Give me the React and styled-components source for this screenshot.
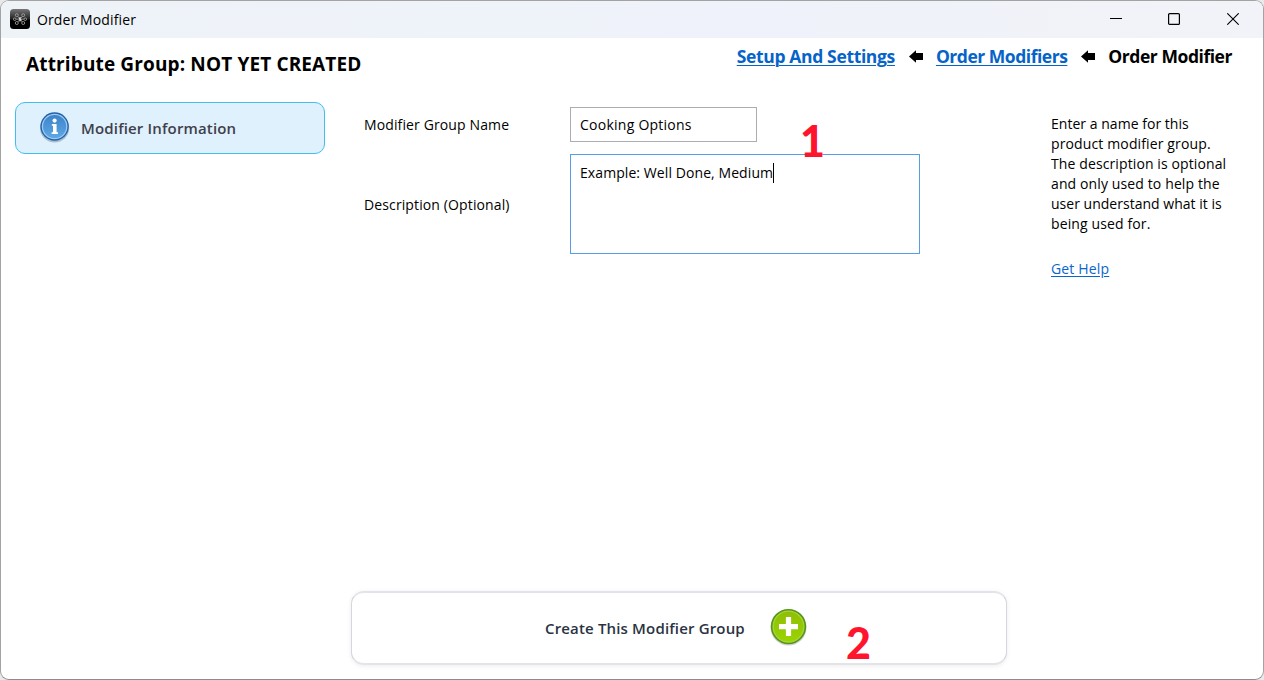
import React, { useState } from "react";
import styled, { createGlobalStyle, css } from "styled-components";

const GlobalStyle = createGlobalStyle`
    * {
        box-sizing: border-box;
    }
    body {
        margin: 0;
        background: #e9e9e9;
        font-family: "Open Sans", "Noto Sans", sans-serif;
        color: #000;
        overflow: hidden;
    }
`;

const Window = styled.div`
    position: relative;
    display: flex;
    flex-direction: column;
    width: 1264px;
    height: 680px;
    background: #fff;
    border: 1px solid #a3a3a3;
    border-bottom-color: #8c8c8c;
    border-radius: 9px;
    overflow: hidden;
`;

const TitleBar = styled.div`
    display: flex;
    align-items: center;
    height: 37px;
    padding: 0 0 1px 9px;
    background: linear-gradient(90deg, #eef3f8, #eff2fa 60%, #f2f3f8);
`;

const WindowTitle = styled.div`
    flex: 1;
    margin: 1px 0 0 7px;
    font-size: 14px;
    letter-spacing: 0.12px;
    line-height: 20px;
`;

const WindowButtons = styled.div`
    display: flex;
    gap: 46px;
    padding-right: 24px;

    svg {
        display: block;
    }
    svg:last-child {
        margin-left: 1px;
    }
`;

const Header = styled.div`
    display: flex;
    justify-content: space-between;
    height: 64px;
    padding: 4px 31px 0 25px;
`;

const PageTitle = styled.h1`
    margin: 9px 0 0;
    font-size: 19px;
    font-weight: 700;
    line-height: 26px;
    letter-spacing: 0.14px;
    white-space: nowrap;
`;

const Breadcrumbs = styled.div`
    display: flex;
    align-items: center;
    height: 28px;
    font-size: 17.5px;
    font-weight: 700;
    line-height: 28px;
    white-space: nowrap;

    svg {
        margin: 0 13px 0 14px;
    }
`;

const Crumb = styled.span`
    letter-spacing: ${props => props.$spacing || 0}px;
    ${props => props.$link && css`
        color: #0563c9;
        text-decoration: underline;
        text-decoration-thickness: 1px;
        text-underline-offset: 2px;
    `}
`;

const Body = styled.div`
    display: grid;
    grid-template-columns: 310px 1fr 176px;
    padding: 0 36px 0 14px;
    flex: 1;
`;

const SideItem = styled.div`
    display: flex;
    align-items: center;
    height: 52px;
    padding-left: 22px;
    background: #dff1fd;
    border: 1px solid #41bdf0;
    border-radius: 10px;

    svg {
        margin-bottom: 2px;
    }
`;

const SideLabel = styled.span`
    margin-left: 9px;
    font-size: 15px;
    font-weight: 600;
    line-height: 22px;
    color: #40404a;
    letter-spacing: 0.16px;
`;

const Form = styled.div`
    display: grid;
    grid-template-columns: 206px 350px;
    grid-template-rows: 35px 100px;
    row-gap: 12px;
    align-content: start;
    align-items: center;
    padding: 5px 0 0 39px;
`;

const Label = styled.label`
    padding-top: 1px;
    font-size: 14px;
    line-height: 20px;
    letter-spacing: 0.12px;
`;

const fieldStyle = css`
    margin: 0;
    outline: none;
    background: #fff;
    color: #000;
    font-family: inherit;
    font-size: 14px;
    line-height: 20px;
    border-radius: 0;
`;

const TextInput = styled.input`
    ${fieldStyle}
    width: 187px;
    height: 35px;
    padding: 0 9px;
    border: 1px solid #abadb3;
    letter-spacing: 0.25px;
`;

const TextArea = styled.div`
    ${fieldStyle}
    display: flex;
    align-items: flex-start;
    width: 350px;
    height: 100px;
    padding: 8px 9px;
    border: 1px solid #569de5;
    letter-spacing: 0.08px;
`;

const Caret = styled.span`
    width: 1px;
    height: 20px;
    background: #000;
`;

const Help = styled.div`
    padding-top: 12px;
    font-size: 14px;
    line-height: 20px;
    white-space: nowrap;
`;

const HelpLine = styled.div`
    letter-spacing: ${props => props.$spacing || 0}px;
`;

const HelpLink = styled.div`
    margin-top: 25px;
    color: #0a66cc;
    letter-spacing: 0.16px;
    text-decoration: underline;
    text-underline-offset: 2px;
`;

const Footer = styled.div`
    display: flex;
    padding: 0 0 14px 350px;
`;

const CreateButton = styled.button`
    display: flex;
    align-items: center;
    width: 656px;
    height: 74px;
    padding: 0 0 0 193px;
    background: #fff;
    border: 2px solid #e3e3ea;
    border-width: 2px 1px 2px 1px;
    border-left-color: #d5d6de;
    border-right-color: #d5d6de;
    border-radius: 13px;
    box-shadow: 0 1px 5px rgba(0, 0, 0, 0.08);
    font-family: inherit;
    font-size: 15px;
    font-weight: 600;
    line-height: 22px;
    color: #2a3342;
    white-space: nowrap;

    span {
        width: 200px;
        text-align: left;
        letter-spacing: 0.16px;
    }

    svg {
        margin: -3px 0 0 24.5px;
    }
`;

const StepNumber = styled.div`
    position: absolute;
    left: ${props => props.$x}px;
    top: ${props => props.$y}px;
    font-family: Lato, "Open Sans", sans-serif;
    font-size: 43px;
    font-weight: 900;
    line-height: 50px;
    color: #ff142d;
`;

function AppIcon() {
    return (
        <svg width="20" height="20" viewBox="0 0 20 20">
            <defs>
                <linearGradient id="appBg" x1="0" y1="0" x2="0" y2="1">
                    <stop offset="0" stopColor="#777" />
                    <stop offset="0.5" stopColor="#222" />
                    <stop offset="0.55" stopColor="#000" />
                    <stop offset="1" stopColor="#000" />
                </linearGradient>
            </defs>
            <rect width="20" height="20" rx="3.5" fill="url(#appBg)" />
            <g fill="none" stroke="#aaa" strokeWidth="0.8">
                <circle cx="6.8" cy="6.2" r="1.5" />
                <circle cx="13.2" cy="6.2" r="1.5" />
                <circle cx="4.7" cy="10.2" r="1.3" />
                <circle cx="15.3" cy="10.2" r="1.3" />
                <circle cx="6.8" cy="14" r="1.5" />
                <circle cx="13.2" cy="14" r="1.5" />
                <path d="M8 7.5L12 12.8M12 7.5L8 12.8M6.2 10.2H13.8" />
            </g>
            <path d="M11.2 8.8H9.3V10.2H10.9V11.8H8.9" fill="none" stroke="#eee" strokeWidth="0.9" />
        </svg>
    );
}

function BackArrow() {
    return (
        <svg width="14" height="13" viewBox="0 0 14 13">
            <path d="M0 6.5L7 0.3V3H14V10H7V12.7Z" fill="#000" />
        </svg>
    );
}

function InfoIcon() {
    return (
        <svg width="34" height="34" viewBox="0 0 34 34">
            <defs>
                <linearGradient id="infoBg" x1="0" y1="0" x2="0" y2="1">
                    <stop offset="0" stopColor="#3b82c9" />
                    <stop offset="1" stopColor="#5fa9e4" />
                </linearGradient>
            </defs>
            <ellipse cx="16.6" cy="18" rx="14.6" ry="14.4" fill="#6d8197" opacity="0.45" />
            <circle cx="16.6" cy="16.5" r="14.2" fill="#2162ae" />
            <circle cx="16.6" cy="16.5" r="12.2" fill="url(#infoBg)" stroke="#9ccaf0" strokeWidth="1.3" />
            <circle cx="16.6" cy="10.6" r="2.1" fill="#fff" />
            <path d="M13.8 14H18.6V22.3H20V24H13.6V22.3H15V15.7H13.8Z" fill="#fff" />
        </svg>
    );
}

function PlusIcon() {
    return (
        <svg width="38" height="38" viewBox="0 0 38 38">
            <defs>
                <linearGradient id="plusBg" x1="0" y1="0" x2="0" y2="1">
                    <stop offset="0" stopColor="#8fbe06" />
                    <stop offset="1" stopColor="#9ad400" />
                </linearGradient>
            </defs>
            <circle cx="18.5" cy="19.6" r="18" fill="#777" opacity="0.35" />
            <circle cx="18.5" cy="18.6" r="17.7" fill="#569718" />
            <circle cx="18.5" cy="18.6" r="15.4" fill="url(#plusBg)" stroke="#a9d53c" strokeWidth="1.3" />
            <path d="M15.9 9.1H21.1V16H28V21.2H21.1V28.1H15.9V21.2H9V16H15.9Z" fill="#fff" />
        </svg>
    );
}

const helpLines = [
    { text: "Enter a name for this", spacing: 0.03 },
    { text: "product modifier group.", spacing: 0.13 },
    { text: "The description is optional", spacing: 0.11 },
    { text: "and only used to help the", spacing: 0.12 },
    { text: "user understand what it is", spacing: 0.02 },
    { text: "being used for.", spacing: 0.12 },
];

function App() {
    const [name, setName] = useState("Cooking Options");

    return (
        <>
            <GlobalStyle />
            <Window>
                <TitleBar>
                    <AppIcon />
                    <WindowTitle>Order Modifier</WindowTitle>
                    <WindowButtons>
                        <svg width="12" height="12" viewBox="0 0 12 12"><path d="M0 5.5H12" stroke="#000" /></svg>
                        <svg width="12" height="12" viewBox="0 0 12 12"><rect x="0.6" y="0.6" width="10.8" height="10.8" rx="1" fill="none" stroke="#000" strokeWidth="1.2" /></svg>
                        <svg width="12" height="12" viewBox="0 0 12 12"><path d="M0.3 0.3L11.7 11.7M11.7 0.3L0.3 11.7" stroke="#000" strokeWidth="1.1" /></svg>
                    </WindowButtons>
                </TitleBar>

                <Header>
                    <PageTitle>Attribute Group: NOT YET CREATED</PageTitle>
                    <Breadcrumbs>
                        <Crumb $link $spacing={-0.35}>Setup And Settings</Crumb>
                        <BackArrow />
                        <Crumb $link $spacing={-0.48}>Order Modifiers</Crumb>
                        <BackArrow />
                        <Crumb $spacing={-0.45}>Order Modifier</Crumb>
                    </Breadcrumbs>
                </Header>

                <Body>
                    <div>
                        <SideItem>
                            <InfoIcon />
                            <SideLabel>Modifier Information</SideLabel>
                        </SideItem>
                    </div>

                    <Form>
                        <Label>Modifier Group Name</Label>
                        <TextInput value={name} onChange={e => setName(e.target.value)} />
                        <Label>Description (Optional)</Label>
                        <TextArea>
                            <span>Example: Well Done, Medium</span>
                            <Caret />
                        </TextArea>
                    </Form>

                    <Help>
                        {helpLines.map(line => (
                            <HelpLine key={line.text} $spacing={line.spacing}>{line.text}</HelpLine>
                        ))}
                        <HelpLink>Get Help</HelpLink>
                    </Help>
                </Body>

                <Footer>
                    <CreateButton>
                        <span>Create This Modifier Group</span>
                        <PlusIcon />
                    </CreateButton>
                </Footer>

                <StepNumber $x={799} $y={115}>1</StepNumber>
                <StepNumber $x={845} $y={617}>2</StepNumber>
            </Window>
        </>
    );
}

export default App;
